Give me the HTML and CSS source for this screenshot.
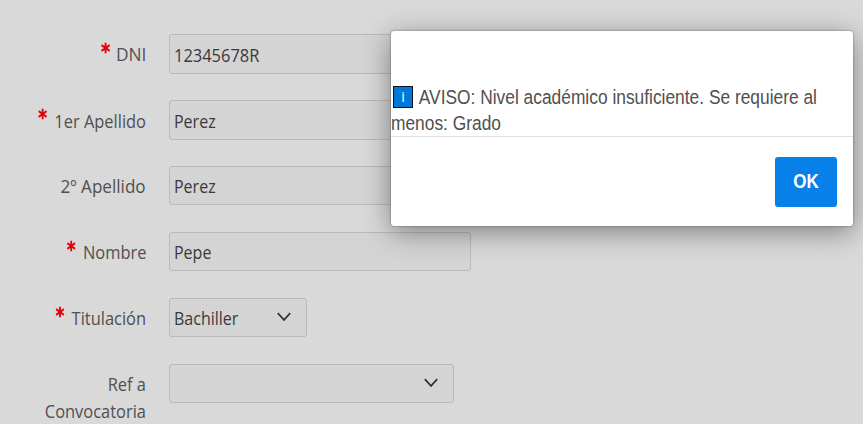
FILE: index.html
```html
<!DOCTYPE html>
<html lang="es">
<head>
<meta charset="utf-8">
<title>Solicitud</title>
<link rel="stylesheet" href="styles.css">
</head>
<body>
<svg class="defs" width="0" height="0">
  <symbol id="star" viewBox="0 0 11 12"><path d="M5.5 .8v10.4M1 3.2l9 5.6M10 3.2L1 8.8" fill="none" stroke="#e3000b" stroke-width="2.1"/></symbol>
  <symbol id="chevron" viewBox="0 0 14 10"><path d="M.8 1.2L7 7.9l6.2-6.7" fill="none" stroke="#333" stroke-width="1.7"/></symbol>
</svg>
<form class="form">
  <div class="row"><div class="label"><span class="text short"><svg class="star"><use href="#star"/></svg>DNI</span></div><div class="field tall"><span class="value number">12345678R</span></div></div>
  <div class="row"><div class="label low"><span class="text"><svg class="star"><use href="#star"/></svg>1er Apellido</span></div><div class="field tall"><span class="value">Perez</span></div></div>
  <div class="row"><div class="label"><span class="text second">2º Apellido</span></div><div class="field"><span class="value">Perez</span></div></div>
  <div class="row"><div class="label"><span class="text"><svg class="star"><use href="#star"/></svg>Nombre</span></div><div class="field"><span class="value">Pepe</span></div></div>
  <div class="row"><div class="label"><span class="text"><svg class="star"><use href="#star"/></svg>Titulación</span></div><div class="field degree"><span class="value">Bachiller</span><svg class="chevron"><use href="#chevron"/></svg></div></div>
  <div class="row"><div class="label"><span class="text">Ref a<br>Convocatoria</span></div><div class="field call"><svg class="chevron"><use href="#chevron"/></svg></div></div>
</form>
<div class="dialog" role="dialog">
  <div class="message"><span class="info">i</span><p class="copy"><span class="first">AVISO: Nivel académico insuficiente. Se requiere al</span><br>menos: Grado</p></div>
  <div class="actions"><button class="ok"><span>OK</span></button></div>
</div>
</body>
</html>
```
FILE: styles.css
```css
* { box-sizing: border-box; }
body { margin: 0; width: 863px; height: 424px; overflow: hidden; background: #d9d9d9; font: 19px/27px "Open Sans", "Noto Sans", sans-serif; color: #505050; }
.defs { position: absolute; }
.form { padding-top: 34px; }
.row { display: flex; height: 66px; }
.label { width: 146px; margin-right: 23px; padding-top: 7px; text-align: right; white-space: nowrap; }
.low { padding-top: 8px; }
.text { display: inline-block; transform: scaleX(.865); transform-origin: right; }
.short { transform: scaleX(.91); }
.second { transform: scaleX(.9); }
.star { width: 11px; height: 12px; margin: -10px 8px 0 0; vertical-align: 7px; }
.short .star { margin-right: 6px; }
.low .star { vertical-align: 8px; }
.field { display: flex; align-items: center; width: 302px; height: 39px; padding: 2px 0 0 4px; border: 1px solid #bababa; border-radius: 3px; background: #d4d4d4; color: #3a3a3a; }
.tall { height: 40px; padding-top: 3px; }
.value { transform: scaleX(.842); transform-origin: left; }
.number { transform: scaleX(.865); }
.degree { width: 138px; }
.call { width: 285px; }
.chevron { width: 14px; height: 10px; margin: 0 15.5px 3px auto; }
.dialog { position: absolute; left: 391px; top: 31px; width: 462px; height: 195px; border-radius: 3px; background: #fff; box-shadow: 0 0 2px rgba(0,0,0,.5), 0 6px 28px rgba(0,0,0,.42); font: 20px/26px "Liberation Sans", Arial, sans-serif; color: #505050; }
.message { display: flex; height: 106px; padding-top: 53px; border-bottom: 1px solid #e2e2e2; }
.info { flex: none; width: 20px; height: 22px; margin: 2px 0 0 2px; border: 1.5px solid #0a1420; background: #0078d7; color: #fff; font: 14px/20px "Open Sans", sans-serif; text-align: center; }
.copy { margin: 0 0 0 -22px; white-space: nowrap; transform: scaleX(.868); transform-origin: left; }
.first { margin-left: 32px; }
.actions { display: flex; justify-content: flex-end; padding: 20px 16px; }
.ok { width: 62px; height: 50px; padding: 0 0 2px; border: 0; border-radius: 3px; background: #0780ea; color: #fff; font: bold 20px "Liberation Sans", Arial, sans-serif; }
.ok span { display: block; transform: scaleX(.85); }
```
